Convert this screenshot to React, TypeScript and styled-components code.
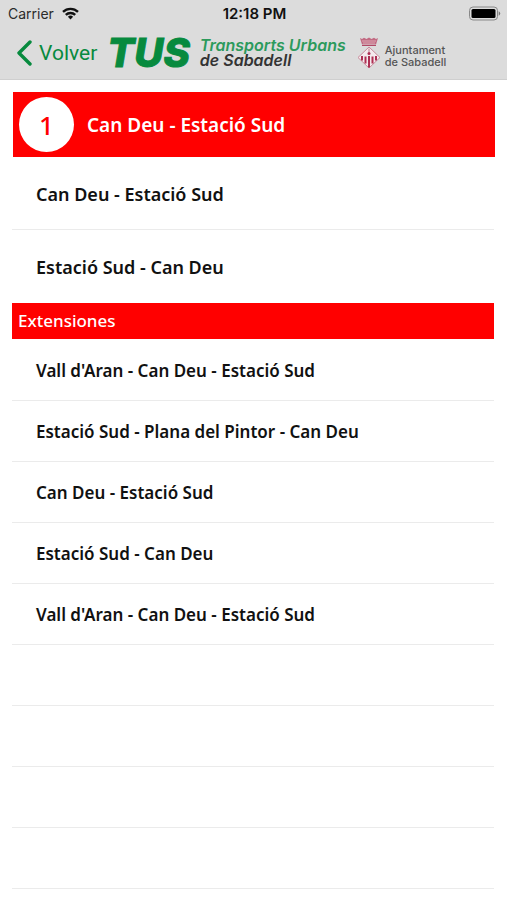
import React from "react";
import styled, { createGlobalStyle } from "styled-components";

const GREEN = "#078a3e";
const RED = "#ff0000";

const GlobalStyle = createGlobalStyle`
  *, *::before, *::after { box-sizing: border-box; }
  body {
    margin: 0;
    background: #fff;
    color: #111;
    font-family: "Noto Sans", "Open Sans", sans-serif;
  }
`;

const Screen = styled.div`
  min-height: 100vh;
  overflow: hidden;
`;

const TopBar = styled.header`
  background: #dcdcdc;
  border-bottom: 1px solid #cfcfcf;
`;

const StatusBar = styled.div`
  display: grid;
  grid-template-columns: 1fr auto 1fr;
  align-items: center;
  height: 27px;
  padding: 0 6px 0 8px;
  font-family: Inter, sans-serif;
  font-size: 14px;
  line-height: 16px;
  color: #111;
`;

const Carrier = styled.div`
  display: flex;
  align-items: center;
  gap: 8px;
  color: #2b2b2b;
`;

const Clock = styled.time`
  font-size: 15px;
  font-weight: 600;
`;

const Battery = styled.svg`
  justify-self: end;
`;

const NavBar = styled.nav`
  display: flex;
  align-items: center;
  height: 52px;
  padding: 0 16px;
`;

const BackButton = styled.button`
  display: flex;
  align-items: center;
  gap: 7px;
  padding: 0;
  border: 0;
  background: none;
  color: ${GREEN};
  font-family: Roboto, sans-serif;
  font-size: 21px;
  line-height: 28px;
  cursor: pointer;
`;

const Brand = styled.div`
  display: flex;
  align-items: center;
  margin-left: 10px;
  white-space: nowrap;
`;

const Wordmark = styled.span`
  color: ${GREEN};
  font-family: Inter, sans-serif;
  font-size: 40px;
  line-height: 40px;
  font-weight: 800;
  font-style: italic;
  -webkit-text-stroke: 1px ${GREEN};
  stroke-linejoin: round;
`;

const Tagline = styled.span`
  display: flex;
  flex-direction: column;
  margin-left: 10px;
  color: #333;
  font-family: Inter, sans-serif;
  font-size: 16px;
  line-height: 15px;
  font-weight: 600;
  font-style: italic;
`;

const TaglineTop = styled.span`
  color: #2c9a5c;
`;

const Crest = styled.svg`
  margin-left: 11px;
`;

const Council = styled.span`
  display: flex;
  flex-direction: column;
  margin: 5px 0 0 4px;
  color: #555;
  font-family: Inter, sans-serif;
  font-size: 11px;
  line-height: 12px;
  font-weight: 500;
`;

const Content = styled.main`
  padding: 12px 13px 0 12px;
`;

const LineBanner = styled.h1`
  display: flex;
  align-items: center;
  gap: 13px;
  height: 65px;
  margin: 0 -1px 0 1px;
  padding: 0 6px;
  background: ${RED};
  color: #fff;
  font-size: 19px;
  line-height: 28px;
  font-weight: 600;
`;

const LineNumber = styled.span`
  display: grid;
  place-items: center;
  width: 55px;
  height: 55px;
  border-radius: 50%;
  background: #fff;
  color: ${RED};
  font-size: 26px;
  line-height: 36px;
  font-weight: 500;
`;

const SectionTitle = styled.h2`
  margin: 0;
  padding: 6px;
  background: ${RED};
  color: #fff;
  font-size: 17px;
  line-height: 24px;
  font-weight: 500;
`;

const RouteList = styled.ul`
  margin: 0;
  padding: 0;
  list-style: none;
`;

const ExtensionList = styled(RouteList)`
  padding-top: 1px;
`;

const RouteItem = styled.li<{ $large?: boolean }>`
  height: ${(p) => (p.$large ? "73px" : "61px")};
  border-bottom: 1px solid #ebebeb;
  font-size: ${(p) => (p.$large ? "18px" : "17px")};
  ${(p) => p.$large && "&:last-child { border-bottom-color: transparent; }"}
`;

const RouteLink = styled.a`
  display: flex;
  align-items: center;
  height: 100%;
  padding: 1px 24px 0;
  color: #111;
  font-weight: 600;
  line-height: 24px;
  text-decoration: none;
`;

const mainRoutes = ["Can Deu - Estació Sud", "Estació Sud - Can Deu"];

const extensions = [
  "Vall d'Aran - Can Deu - Estació Sud",
  "Estació Sud - Plana del Pintor - Can Deu",
  "Can Deu - Estació Sud",
  "Estació Sud - Can Deu",
  "Vall d'Aran - Can Deu - Estació Sud",
];

const emptyRows = [0, 1, 2, 3];

function WifiIcon() {
  return (
    <svg width="17" height="13" viewBox="0 0 17 13" role="img" aria-label="Wi-Fi">
      <g fill="none" stroke="#111" strokeWidth="2.4">
        <path d="M1 4.9a10.8 10.8 0 0 1 15 0" />
        <path d="M3.8 7.9a6.8 6.8 0 0 1 9.4 0" />
      </g>
      <path d="M8.5 12.5 5.9 9.8a3.8 3.8 0 0 1 5.2 0z" fill="#111" />
    </svg>
  );
}

function BatteryIcon() {
  return (
    <Battery width="34" height="15" viewBox="0 0 34 15" role="img" aria-label="Battery full">
      <rect x="2.5" y="1" width="28" height="13" rx="3.5" fill="none" stroke="#888" />
      <rect x="4.5" y="3" width="24" height="9" rx="1.5" fill="#000" />
      <path d="M31.7 5.2v4.6q1.5-.8 1.5-2.3t-1.5-2.3z" fill="#777" />
    </Battery>
  );
}

function CrestIcon() {
  return (
    <Crest width="24" height="32" viewBox="0 0 24 32" role="img" aria-label="Escut de Sabadell">
      <path d="M3 1 5 2l2-1.200 2.500 1.200L12 .5 14.500 2 17 .8 19 2l2-1-2 6.500H5z" fill="#c26a82" />
      <path d="M5 4h14M6 6h12" stroke="#e6c3cc" strokeWidth=".7" />
      <path d="M5 8.500h14" stroke="#b04966" />
      <path d="M12 10 23 20.500 12 31 1 20.500z" fill="#f4eaed" stroke="#c98a9b" />
      <path d="M8.500 19.500v7M12 19v11.500M15.500 19.500v7M5 19v4.500M19 19v4.500" stroke="#ad2f53" strokeWidth="2" />
      <path d="M12 11.500v4" stroke="#c98a9b" strokeWidth="1.200" />
      <circle cx="12" cy="16.500" r="1.500" fill="#ad2f53" />
    </Crest>
  );
}

export default function App() {
  return (
    <Screen>
      <GlobalStyle />
      <TopBar>
        <StatusBar>
          <Carrier>
            Carrier
            <WifiIcon />
          </Carrier>
          <Clock>12:18 PM</Clock>
          <BatteryIcon />
        </StatusBar>
        <NavBar>
          <BackButton type="button">
            <svg width="16" height="26" viewBox="0 0 16 26" aria-hidden="true">
              <path d="M14 2 3 13l11 11" fill="none" stroke={GREEN} strokeWidth="3.4" strokeLinecap="round" strokeLinejoin="round" />
            </svg>
            Volver
          </BackButton>
          <Brand>
            <Wordmark>TUS</Wordmark>
            <Tagline>
              <TaglineTop>Transports Urbans</TaglineTop>
              <span>de Sabadell</span>
            </Tagline>
            <CrestIcon />
            <Council>
              <span>Ajuntament</span>
              <span>de Sabadell</span>
            </Council>
          </Brand>
        </NavBar>
      </TopBar>
      <Content>
        <LineBanner>
          <LineNumber>1</LineNumber>
          Can Deu - Estació Sud
        </LineBanner>
        <RouteList>
          {mainRoutes.map((name) => (
            <RouteItem key={name} $large>
              <RouteLink href="#">{name}</RouteLink>
            </RouteItem>
          ))}
        </RouteList>
        <SectionTitle>Extensiones</SectionTitle>
        <ExtensionList>
          {extensions.map((name, index) => (
            <RouteItem key={index}>
              <RouteLink href="#">{name}</RouteLink>
            </RouteItem>
          ))}
          {emptyRows.map((row) => (
            <RouteItem key={`empty-${row}`} aria-hidden="true" />
          ))}
        </ExtensionList>
      </Content>
    </Screen>
  );
}
